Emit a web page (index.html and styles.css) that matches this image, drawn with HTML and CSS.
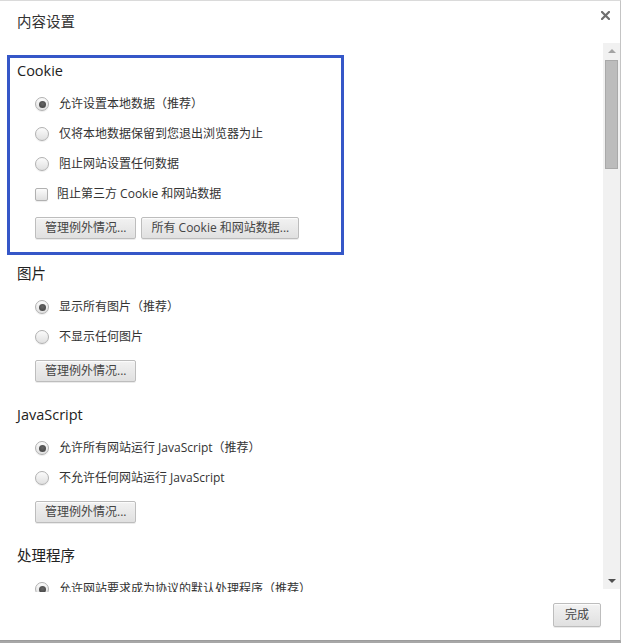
FILE: index.html
```html
<!DOCTYPE html>
<html lang="zh-CN">
<head>
<meta charset="utf-8">
<title>内容设置</title>
<link rel="stylesheet" href="styles.css">
</head>
<body>
<div class="dialog">
  <div class="header">
    <div class="title">内容设置</div>
    <svg class="close" width="9" height="9" viewBox="0 0 9 9"><path d="M1 1 L8 8 M8 1 L1 8" stroke="#6f6f6f" stroke-width="2.2" stroke-linecap="square" fill="none"/></svg>
  </div>
  <div class="main">
    <div class="content">
      <div class="section highlight">
        <div class="heading">Cookie</div>
        <div class="options">
          <div class="row"><span class="radio checked"></span><span class="label">允许设置本地数据（推荐）</span></div>
          <div class="row"><span class="radio"></span><span class="label">仅将本地数据保留到您退出浏览器为止</span></div>
          <div class="row"><span class="radio"></span><span class="label">阻止网站设置任何数据</span></div>
          <div class="row"><span class="check"></span><span class="label">阻止第三方 Cookie 和网站数据</span></div>
        </div>
        <div class="buttons">
          <span class="btn">管理例外情况...</span>
          <span class="btn">所有 Cookie 和网站数据...</span>
        </div>
      </div>
      <div class="section after-box">
        <div class="heading">图片</div>
        <div class="options">
          <div class="row"><span class="radio checked"></span><span class="label">显示所有图片（推荐）</span></div>
          <div class="row"><span class="radio"></span><span class="label">不显示任何图片</span></div>
        </div>
        <div class="buttons"><span class="btn">管理例外情况...</span></div>
      </div>
      <div class="section">
        <div class="heading">JavaScript</div>
        <div class="options">
          <div class="row"><span class="radio checked"></span><span class="label">允许所有网站运行 JavaScript（推荐）</span></div>
          <div class="row"><span class="radio"></span><span class="label">不允许任何网站运行 JavaScript</span></div>
        </div>
        <div class="buttons"><span class="btn">管理例外情况...</span></div>
      </div>
      <div class="section">
        <div class="heading">处理程序</div>
        <div class="options">
          <div class="row"><span class="radio checked"></span><span class="label">允许网站要求成为协议的默认处理程序（推荐）</span></div>
          <div class="row"><span class="radio"></span><span class="label">不允许任何网站处理协议</span></div>
        </div>
      </div>
    </div>
    <div class="scrollbar">
      <div class="arrow up"></div>
      <div class="track"><div class="thumb"></div></div>
      <div class="arrow down"></div>
    </div>
  </div>
  <div class="footer">
    <span class="btn done">完成</span>
  </div>
</div>
</body>
</html>
```

FILE: styles.css
```css
* { box-sizing: border-box; }

html, body {
  margin: 0;
  padding: 0;
}

body {
  background: #a7a7a7;
  font-family: "Open Sans", "Noto Sans CJK SC", sans-serif;
  color: #333;
  width: 621px;
  height: 643px;
  overflow: hidden;
}

.dialog {
  width: 621px;
  height: 641px;
  background: #fff;
  border-top: 1px solid #dadada;
  border-right: 1px solid #c4c4c4;
  border-bottom: 1px solid #9c9c9c;
  display: flex;
  flex-direction: column;
}

.header {
  height: 42px;
  flex: none;
  display: flex;
  justify-content: space-between;
  align-items: flex-start;
  padding: 0 10px 0 17px;
}

.title {
  margin-top: 11px;
  font-size: 14.5px;
  line-height: 20px;
  color: #333;
}

.close {
  margin-top: 10px;
}

.main {
  height: 549px;
  flex: none;
  display: flex;
  align-items: flex-start;
}

.content {
  flex: 1;
  height: 549px;
  overflow: hidden;
  padding-top: 12px;
}

.section {
  padding-left: 17px;
  margin-top: 23px;
}

.section.highlight {
  margin-top: 0;
  margin-left: 7px;
  width: 337px;
  border: 3px solid #3557c8;
  padding: 3px 0 13px 7px;
}

.section.after-box {
  margin-top: 9px;
}

.heading {
  font-size: 14.5px;
  line-height: 20px;
  color: #222;
}

.options {
  margin-top: 8px;
}

.row {
  height: 30px;
  display: flex;
  align-items: center;
  padding-left: 18px;
  font-size: 12px;
  line-height: 16px;
  color: #333;
  white-space: nowrap;
}

.radio {
  width: 14px;
  height: 14px;
  border-radius: 50%;
  border: 1px solid #b1b1b1;
  background: linear-gradient(#fbfbfb, #e0e0e0);
  box-shadow: 0 1px 1px rgba(0, 0, 0, 0.08);
  margin-right: 10px;
  flex: none;
  display: flex;
  align-items: center;
  justify-content: center;
}

.radio.checked::after {
  content: "";
  width: 7px;
  height: 7px;
  border-radius: 50%;
  background: radial-gradient(circle at 50% 40%, #666, #3e3e3e);
}

.check {
  width: 13px;
  height: 13px;
  border-radius: 2px;
  border: 1px solid #b1b1b1;
  background: linear-gradient(#fbfbfb, #e0e0e0);
  box-shadow: 0 1px 1px rgba(0, 0, 0, 0.08);
  margin-right: 9px;
  flex: none;
}

.buttons {
  margin-top: 8px;
  padding-left: 18px;
  display: flex;
  gap: 5px;
}

.btn {
  display: inline-block;
  height: 22px;
  padding: 0 9px;
  font-size: 12px;
  line-height: 20px;
  color: #444;
  white-space: nowrap;
  border: 1px solid #bdbdbd;
  border-radius: 2px;
  background: linear-gradient(#f2f2f2, #e0e0e0);
  box-shadow: 0 1px 0 rgba(0, 0, 0, 0.08), inset 0 1px 1px rgba(255, 255, 255, 0.8);
}

.scrollbar {
  width: 17px;
  height: 546px;
  background: #f1f1f1;
  display: flex;
  flex-direction: column;
  flex: none;
}

.arrow {
  height: 17px;
  flex: none;
  display: flex;
  align-items: center;
  justify-content: center;
}

.arrow::after {
  content: "";
  width: 0;
  height: 0;
  border-left: 4px solid transparent;
  border-right: 4px solid transparent;
}

.arrow.up::after {
  border-bottom: 4px solid #a3a3a3;
  margin-top: -1px;
}

.arrow.down::after {
  border-top: 4px solid #505050;
  margin-top: 1px;
}

.track {
  flex: 1;
  padding: 0 2px 0 2px;
}

.thumb {
  height: 109px;
  width: 13px;
  background: #bcbcbc;
  border: 1px solid #a9a9a9;
}

.footer {
  flex: 1;
  display: flex;
  justify-content: flex-end;
  align-items: flex-start;
  padding-top: 11px;
  padding-right: 19px;
}

.btn.done {
  height: 24px;
  line-height: 22px;
  padding: 0 11px;
}
```
